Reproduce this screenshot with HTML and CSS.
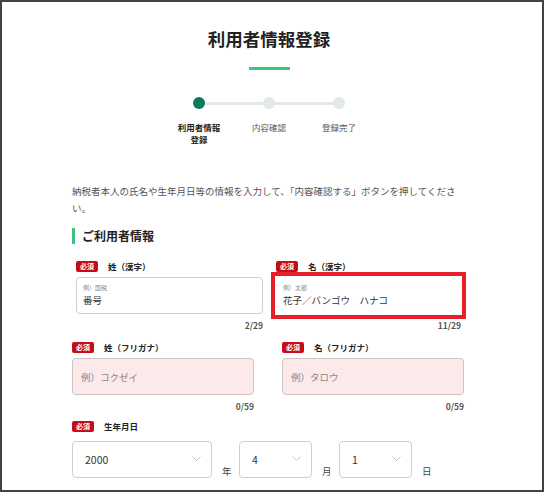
FILE: index.html
```html
<!DOCTYPE html>
<html lang="ja">
	<head>
		<meta charset="UTF-8" />
		<meta name="viewport" content="width=device-width, initial-scale=1.0" />
		<title>利用者情報登録</title>
		<link rel="stylesheet" href="styles.css">
	</head>
	<body>
		<div class="frame">
			<div class="page">
				<h1 class="title">利用者情報登録</h1>
				<div class="title-bar"></div>

				<ol class="steps">
					<li class="step active"><span class="dot"></span><span class="step-label">利用者情報<br>登録</span></li>
					<li class="step"><span class="dot"></span><span class="step-label">内容確認</span></li>
					<li class="step"><span class="dot"></span><span class="step-label">登録完了</span></li>
				</ol>

				<p class="lead">納税者本人の氏名や生年月日等の情報を入力して、「内容確認する」ボタンを押してください。</p>

				<h2 class="section">ご利用者情報</h2>

				<div class="row row-kanji">
					<div class="field">
						<div class="label"><span class="badge">必須</span>姓（漢字）</div>
						<div class="input filled">
							<span class="hint">例）国税</span>
							<span class="value">番号</span>
						</div>
						<div class="count">2/29</div>
					</div>
					<div class="field">
						<div class="label"><span class="badge">必須</span>名（漢字）</div>
						<div class="input filled marked">
							<span class="hint">例）太郎</span>
							<span class="value">花子／バンゴウ　ハナコ</span>
						</div>
						<div class="count">11/29</div>
					</div>
				</div>

				<div class="row row-kana">
					<div class="field">
						<div class="label"><span class="badge">必須</span>姓（フリガナ）</div>
						<div class="input empty">例）コクゼイ</div>
						<div class="count">0/59</div>
					</div>
					<div class="field">
						<div class="label"><span class="badge">必須</span>名（フリガナ）</div>
						<div class="input empty">例）タロウ</div>
						<div class="count">0/59</div>
					</div>
				</div>

				<div class="label birth-label"><span class="badge">必須</span>生年月日</div>
				<div class="birth">
					<div class="select year">2000<svg class="chev" width="9" height="6" viewBox="0 0 9 6"><polyline points="0.5,0.5 4.5,4.5 8.5,0.5" fill="none" stroke="#c4c4c4" stroke-width="1"/></svg></div>
					<span class="unit">年</span>
					<div class="select">4<svg class="chev" width="9" height="6" viewBox="0 0 9 6"><polyline points="0.5,0.5 4.5,4.5 8.5,0.5" fill="none" stroke="#c4c4c4" stroke-width="1"/></svg></div>
					<span class="unit">月</span>
					<div class="select">1<svg class="chev" width="9" height="6" viewBox="0 0 9 6"><polyline points="0.5,0.5 4.5,4.5 8.5,0.5" fill="none" stroke="#c4c4c4" stroke-width="1"/></svg></div>
					<span class="unit">日</span>
				</div>
			</div>
		</div>
	</body>
</html>
```

FILE: styles.css
```css
* {
	padding: 0;
	margin: 0;
	box-sizing: border-box;
}
body {
	font-family: "Noto Sans CJK JP", "Noto Sans", sans-serif;
	color: #222;
	background: #fff;
}
.frame {
	width: 544px;
	height: 492px;
	border: 2px solid #444;
	overflow: hidden;
}
.page {
	width: 394px;
	margin-left: 70px;
	padding-top: 25px;
}
.title {
	font-size: 17.5px;
	font-weight: 700;
	line-height: 24px;
	text-align: center;
	color: #222;
}
.title-bar {
	width: 41px;
	height: 3px;
	margin: 16px auto 0;
	background: #3cc47c;
}
.steps {
	list-style: none;
	display: flex;
	justify-content: center;
	margin-top: 27px;
}
.step {
	position: relative;
	width: 70px;
	display: flex;
	flex-direction: column;
	align-items: center;
}
.step + .step::before {
	content: "";
	position: absolute;
	top: 5px;
	left: -35px;
	width: 70px;
	height: 3px;
	background: #e2e9e8;
}
.dot {
	position: relative;
	width: 12px;
	height: 12px;
	border-radius: 50%;
	background: #e2e9e8;
	z-index: 1;
}
.step.active .dot {
	background: #0a7a5a;
}
.step-label {
	margin-top: 12px;
	font-size: 8.5px;
	line-height: 12px;
	text-align: center;
	color: #555;
}
.step.active .step-label {
	font-weight: 700;
	color: #222;
}
.lead {
	margin-top: 38px;
	font-size: 9.5px;
	line-height: 17px;
	color: #555;
}
.section {
	margin-top: 11px;
	padding-left: 7px;
	border-left: 3px solid #3cc47c;
	font-size: 12px;
	font-weight: 700;
	line-height: 16px;
}
.row {
	display: grid;
}
.row-kanji {
	margin-top: 15px;
	padding-left: 4px;
	grid-template-columns: 187px 185px;
	column-gap: 13px;
}
.row-kana {
	margin-top: 9px;
	grid-template-columns: 182px 182px;
	column-gap: 28px;
}
.label {
	display: flex;
	align-items: center;
	gap: 10px;
	height: 14px;
	font-size: 8.5px;
	font-weight: 700;
}
.badge {
	display: inline-block;
	width: 22px;
	height: 11px;
	border-radius: 2px;
	background: #c40d14;
	color: #fff;
	font-size: 7px;
	line-height: 11px;
	text-align: center;
}
.input {
	height: 37px;
	margin-top: 4px;
	border: 1px solid #cfcfcf;
	border-radius: 4px;
}
.input.filled {
	display: flex;
	flex-direction: column;
	padding: 5px 6px 0;
}
.input.marked {
	border-color: #fff;
	border-radius: 0;
	outline: 4px solid #e5202b;
	outline-offset: 1px;
}
.hint {
	font-size: 6px;
	line-height: 9px;
	color: #888;
}
.value {
	margin-top: 2px;
	font-size: 9.5px;
	line-height: 13px;
	color: #333;
}
.input.empty {
	display: flex;
	align-items: center;
	padding-left: 8px;
	background: #fce9ea;
	border-color: #cdc3c3;
	font-size: 9.5px;
	color: #888;
}
.count {
	margin-top: 5px;
	font-size: 8.5px;
	font-weight: 700;
	line-height: 12px;
	text-align: right;
	color: #555;
}
.birth-label {
	margin-top: 7px;
}
.birth {
	display: flex;
	align-items: flex-end;
	margin-top: 8px;
}
.select {
	display: flex;
	align-items: center;
	justify-content: space-between;
	width: 73px;
	height: 37px;
	padding: 0 10px 0 12px;
	border: 1px solid #cfcfcf;
	border-radius: 4px;
	font-size: 10.5px;
	color: #333;
}
.select.year {
	width: 140px;
}
.chev {
	margin-top: -2px;
}
.unit {
	width: 27px;
	padding-left: 10px;
	font-size: 9.5px;
	line-height: 14px;
	color: #444;
}
```
